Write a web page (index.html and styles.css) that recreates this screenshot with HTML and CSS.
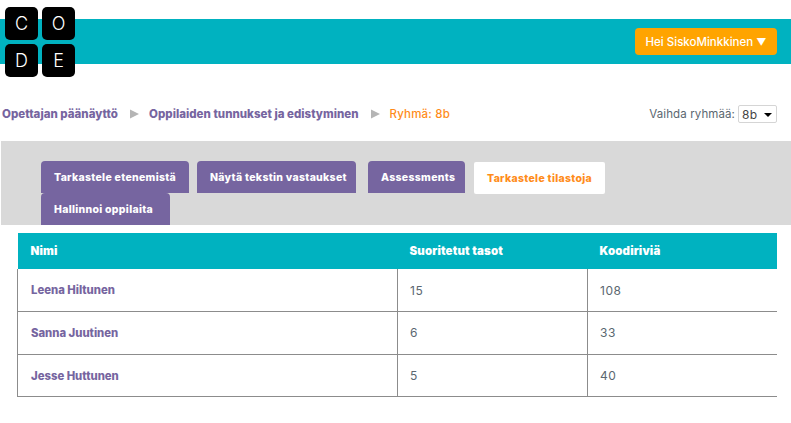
FILE: index.html
```html
<!DOCTYPE html>
<html lang="fi">
<head>
<meta charset="utf-8">
<title>Tarkastele tilastoja</title>
<link rel="stylesheet" href="styles.css">
</head>
<body>
<header class="top">
  <div class="logo">
    <span class="tile">C</span><span class="tile">O</span><span class="tile">D</span><span class="tile">E</span>
  </div>
  <div class="bar">
    <button class="user">Hei SiskoMinkkinen <span class="arrow">▼</span></button>
  </div>
</header>
<div class="crumbs">
  <nav class="path">
    <a class="link">Opettajan päänäyttö</a>
    <svg class="sep" width="10" height="10" viewBox="0 0 10 10"><path d="M0 0.5 L9 5 L0 9.5 Z"/></svg>
    <a class="link">Oppilaiden tunnukset ja edistyminen</a>
    <svg class="sep" width="10" height="10" viewBox="0 0 10 10"><path d="M0 0.5 L9 5 L0 9.5 Z"/></svg>
    <span class="current">Ryhmä: 8b</span>
  </nav>
  <div class="switch">
    <span>Vaihda ryhmää:</span>
    <div class="select"><span>8b</span><svg width="8" height="4" viewBox="0 0 8 4"><path d="M0 0 H8 L4 4 Z"/></svg></div>
  </div>
</div>
<section class="panel">
  <div class="tabs">
    <a class="tab">Tarkastele etenemistä</a>
    <a class="tab">Näytä tekstin vastaukset</a>
    <a class="tab">Assessments</a>
    <a class="tab active">Tarkastele tilastoja</a>
    <a class="tab">Hallinnoi oppilaita</a>
  </div>
</section>
<table class="stats">
  <thead>
    <tr><th>Nimi</th><th>Suoritetut tasot</th><th>Koodiriviä</th></tr>
  </thead>
  <tbody>
    <tr><td class="name">Leena Hiltunen</td><td>15</td><td>108</td></tr>
    <tr><td class="name">Sanna Juutinen</td><td>6</td><td>33</td></tr>
    <tr><td class="name">Jesse Huttunen</td><td>5</td><td>40</td></tr>
  </tbody>
</table>
</body>
</html>
```
FILE: styles.css
```css
* { box-sizing: border-box; }
html, body { margin: 0; padding: 0; }
body {
  width: 791px;
  height: 423px;
  overflow: hidden;
  background: #fff;
  font-family: Inter, "Liberation Sans", sans-serif;
  font-size: 11px;
  color: #5b6770;
}
.top { position: relative; height: 64px; padding-top: 19px; }
.bar {
  height: 45px;
  background: #00b2c0;
  display: flex;
  justify-content: flex-end;
  align-items: center;
  padding: 0 14px 0 0;
}
.logo {
  position: absolute;
  left: 5px;
  top: 7px;
  display: grid;
  grid-template-columns: 33px 33px;
  grid-template-rows: 33px 33px;
  gap: 4px;
}
.tile {
  background: #000;
  border-radius: 5px;
  color: #fff;
  display: flex;
  align-items: center;
  justify-content: center;
  font-size: 18px;
  font-weight: 300;
}
.user {
  width: 142px;
  height: 27px;
  border: 0;
  border-radius: 4px;
  background: #ffa400;
  color: #fff;
  font: 500 11.5px Inter, "Liberation Sans", sans-serif;
  padding: 0;
}
.arrow { font-size: 10px; }
.crumbs {
  display: flex;
  justify-content: space-between;
  align-items: center;
  height: 22px;
  margin-top: 39px;
  padding: 0 14px 0 2px;
}
.path { display: flex; align-items: center; }
.link { color: #7665a0; font-weight: 800; font-size: 11.5px; letter-spacing: 0.02px; }
.sep { fill: #b5b5b5; margin: 0 9px 0 12px; }
.current { color: #ff8c1a; font-weight: 500; font-size: 11.5px; letter-spacing: 0.2px; }
.switch { display: flex; align-items: center; gap: 3px; font-size: 11.5px; letter-spacing: 0.1px; }
.select {
  width: 39px;
  height: 18px;
  border: 1px solid #d5d5d5;
  border-radius: 2px;
  color: #444;
  font-size: 12px;
  letter-spacing: 0.4px;
  display: flex;
  align-items: center;
  justify-content: space-between;
  padding: 0 4px 0 3px;
}
.select svg { fill: #000; margin-top: 2px; }
.panel {
  height: 84px;
  margin: 16px 0 0 1px;
  background: #d9d9d9;
  padding: 20px 0 0 40px;
}
.tabs { display: flex; flex-wrap: wrap; width: 620px; }
.tab {
  height: 32px;
  margin-right: 8px;
  padding: 0 13px;
  display: flex;
  align-items: center;
  background: #7665a0;
  color: #fff;
  border-radius: 4px 4px 0 0;
  font-size: 10.5px;
  font-weight: 800;
  letter-spacing: 0.3px;
  white-space: nowrap;
}
.tab:nth-child(1) { width: 148px; }
.tab:nth-child(2) { width: 159px; margin-right: 12px; }
.tab:nth-child(3) { width: 97px; margin-right: 9px; }
.tab.active {
  width: 131px;
  margin: 1px 8px -1px 0;
  background: #fff;
  color: #ff8c1a;
  border-radius: 2px;
}
.tab:nth-child(5) { width: 129px; }
.stats {
  width: 760px;
  margin: 8px 0 0 17px;
  border-collapse: collapse;
  table-layout: fixed;
}
.stats th:nth-child(1) { width: 380px; }
.stats th:nth-child(2) { width: 190px; }
.stats th {
  height: 36px;
  background: #00b2c0;
  color: #fff;
  text-align: left;
  font-size: 11.5px;
  font-weight: 900;
  letter-spacing: 0.15px;
  padding: 0 12px;
}
.stats th:first-child { padding-left: 13px; }
.stats td {
  height: 42.67px;
  padding: 0 12px;
  border: 1px solid #8c8c8c;
  border-top: 0;
  font-size: 12px;
  letter-spacing: 0.5px;
  color: #5b6770;
}
.stats td:last-child { border-right: 0; }
.stats td.name {
  padding-left: 13px;
  color: #7665a0;
  font-size: 11.3px;
  font-weight: 800;
  letter-spacing: 0;
}
```
